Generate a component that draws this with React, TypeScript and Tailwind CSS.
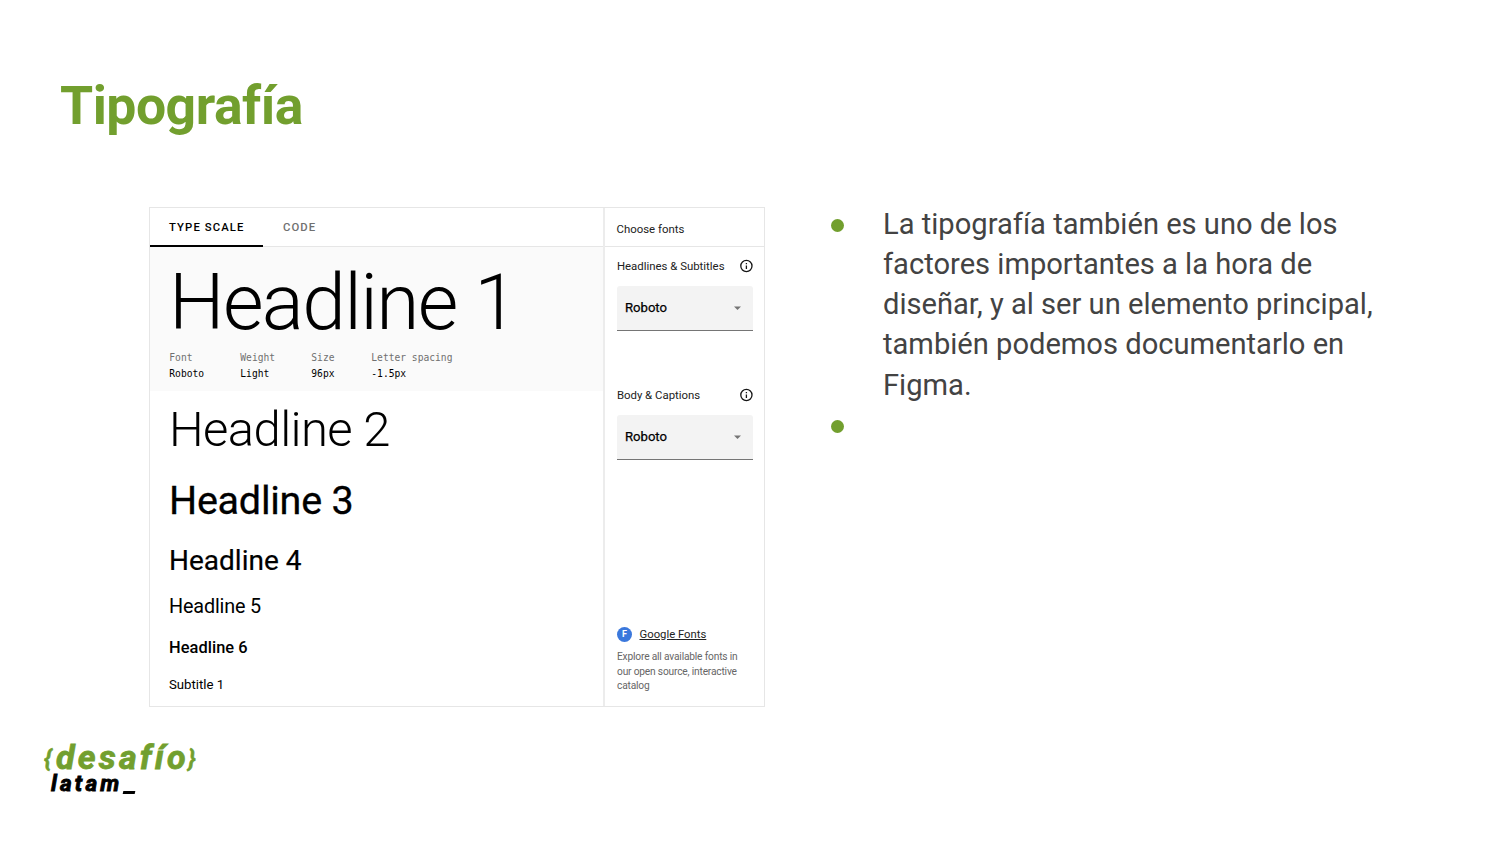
import React from "react";

function InfoIcon() {
  return (
    <svg className="block h-[14px] w-[14px]" viewBox="0 0 14 14" fill="none" stroke="#151515">
      <circle cx="7.4" cy="7" r="5.6" strokeWidth="1.3" />
      <path d="M7.4 6.4v3.5M7.4 4v1.3" strokeWidth="1.3" />
    </svg>
  );
}

function FontSelect({ label }: { label: string }) {
  return (
    <div>
      <div className="flex h-[16px] items-center justify-between text-[11.4px] text-[#222]">
        <span className="pt-[2px] pl-[0.4px]">{label}</span>
        <InfoIcon />
      </div>
      <div className="mt-[12px] flex h-[45px] items-center justify-between rounded-t-[3px] border-b border-[#757575] bg-[#f3f3f3] pr-[12px] pl-[8.5px]">
        <span className="text-[13.1px] text-black [-webkit-text-stroke:0.25px_black]">Roboto</span>
        <svg className="h-[4px] w-[7px]" viewBox="0 0 7 4">
          <path d="M0 0.5h7L3.5 4z" fill="#757575" />
        </svg>
      </div>
    </div>
  );
}

function Spec({ name, value, width }: { name: string; value: string; width: string }) {
  return (
    <div className={width}>
      <div className="text-[#707070]">{name}</div>
      <div className="text-black">{value}</div>
    </div>
  );
}

function TypeScale() {
  return (
    <section className="flex h-[500px] w-[616px] border border-[#e6e6e6] text-black">
      <div className="w-[455px] border-r-2 border-[#ececec]">
        <div className="flex h-[39px] border-b border-[#e6e6e6] text-[11.3px] leading-[40px] font-medium">
          <div className="h-[39px] w-[113px] border-b-2 border-black pl-[19px] tracking-[1.1px] whitespace-nowrap">TYPE SCALE</div>
          <div className="pl-[20px] tracking-[1.1px] text-[#707070]">CODE</div>
        </div>
        <div className="h-[144px] bg-[#fafafa] pt-[15px] pl-[19px]">
          <div className="h-[80px] text-[78.5px] leading-[80px] font-light tracking-[-1.65px] whitespace-nowrap">Headline 1</div>
          <div className="mt-[8px] flex pl-[0.3px] font-['DejaVu_Sans_Mono',monospace] text-[9.65px] leading-[16px] whitespace-nowrap">
            <Spec name="Font" value="Roboto" width="w-[71px]" />
            <Spec name="Weight" value="Light" width="w-[71px]" />
            <Spec name="Size" value="96px" width="w-[60px]" />
            <Spec name="Letter spacing" value="-1.5px" width="w-[90px]" />
          </div>
        </div>
        <div className="pl-[19px] whitespace-nowrap">
          <div className="mt-[9px] h-[60px] text-[49px] leading-[60px] font-light tracking-[-0.6px]">Headline 2</div>
          <div className="mt-[16px] h-[50px] text-[39.5px] leading-[50px] tracking-[-0.25px] [-webkit-text-stroke:0.3px_black]">Headline 3</div>
          <div className="mt-[17px] h-[36px] text-[28px] leading-[36px] [-webkit-text-stroke:0.2px_black]">Headline 4</div>
          <div className="mt-[15px] h-[26px] text-[19.8px] leading-[26px] tracking-[-0.15px]">Headline 5</div>
          <div className="mt-[17px] h-[22px] text-[16.4px] leading-[22px] font-medium tracking-[0.05px]">Headline 6</div>
          <div className="mt-[17px] h-[18px] text-[13.2px] leading-[18px]">Subtitle 1</div>
        </div>
      </div>
      <aside className="-ml-px flex grow flex-col">
        <div className="ml-px h-[39px] border-b border-[#e6e6e6] pl-[11.5px] text-[11.4px] leading-[42px] text-[#222]">Choose fonts</div>
        <div className="flex grow flex-col pr-[11px] pl-[12.5px]">
          <div className="mt-[11px]"><FontSelect label="Headlines &amp; Subtitles" /></div>
          <div className="mt-[56px]"><FontSelect label="Body &amp; Captions" /></div>
          <div className="mt-[166px] flex h-[16px] items-center gap-[7.5px]">
            <span className="ml-[0.5px] flex h-[15px] w-[15px] items-center justify-center rounded-full bg-[#3b78dc] pt-px text-[9px] font-bold text-white">F</span>
            <a className="pt-[2px] text-[11.3px] text-[#222] underline underline-offset-1">Google Fonts</a>
          </div>
          <p className="mt-[8px] pl-[0.5px] text-[10.2px] leading-[14.6px] tracking-[-0.18px] whitespace-nowrap text-[#666]">
            Explore all available fonts in<br />our open source, interactive<br />catalog
          </p>
        </div>
      </aside>
    </section>
  );
}

function Logo() {
  return (
    <div className="ml-[44px] w-[170px] pt-[2px] font-['Roboto',sans-serif] whitespace-nowrap italic">
      <div className="flex h-[31px] items-center font-bold text-[#729f2e]">
        <span className="w-[12px] pt-[3px] text-[24px] leading-[28px] [-webkit-text-stroke:0.5px_#729f2e]">{"{"}</span>
        <span className="w-[132px] text-[34px] leading-[31px] tracking-[3.2px] [-webkit-text-stroke:0.8px_#729f2e]">desafío</span>
        <span className="pt-[3px] text-[24px] leading-[28px] [-webkit-text-stroke:0.5px_#729f2e]">{"}"}</span>
      </div>
      <div className="flex h-[22px] pl-[7px] text-[22.5px] leading-[21px] font-bold text-black">
        <span className="w-[72px] tracking-[3.2px] [-webkit-text-stroke:0.9px_black]">latam</span>
        <span className="mt-[18px] h-[3px] w-[12px] -skew-x-12 bg-black" />
      </div>
    </div>
  );
}

export default function App() {
  return (
    <main className="h-[844px] w-[1500px] overflow-hidden bg-white font-['Roboto',sans-serif]">
      <h1 className="h-[207px] pt-[71px] pl-[60px] text-[53.5px] leading-[70px] font-bold tracking-[-0.5px] text-[#729f2e]">Tipografía</h1>
      <div className="flex h-[533px] pl-[149px]">
        <TypeScale />
        <ul className="ml-[65.5px] text-[29.12px] leading-[40.15px] text-[#434343]">
          <li className="flex">
            <span className="mt-[12.4px] mr-[39.5px] h-[13px] w-[13px] shrink-0 rounded-full bg-[#729f2e]" />
            <p className="-mt-[3px] whitespace-nowrap">
              La tipografía también es uno de los<br />factores importantes a la hora de<br />diseñar, y al ser un elemento principal,<br />también podemos documentarlo en<br />Figma.
            </p>
          </li>
          <li className="flex h-[40px]">
            <span className="mt-[15.6px] h-[13px] w-[13px] shrink-0 rounded-full bg-[#729f2e]" />
          </li>
        </ul>
      </div>
      <Logo />
    </main>
  );
}
